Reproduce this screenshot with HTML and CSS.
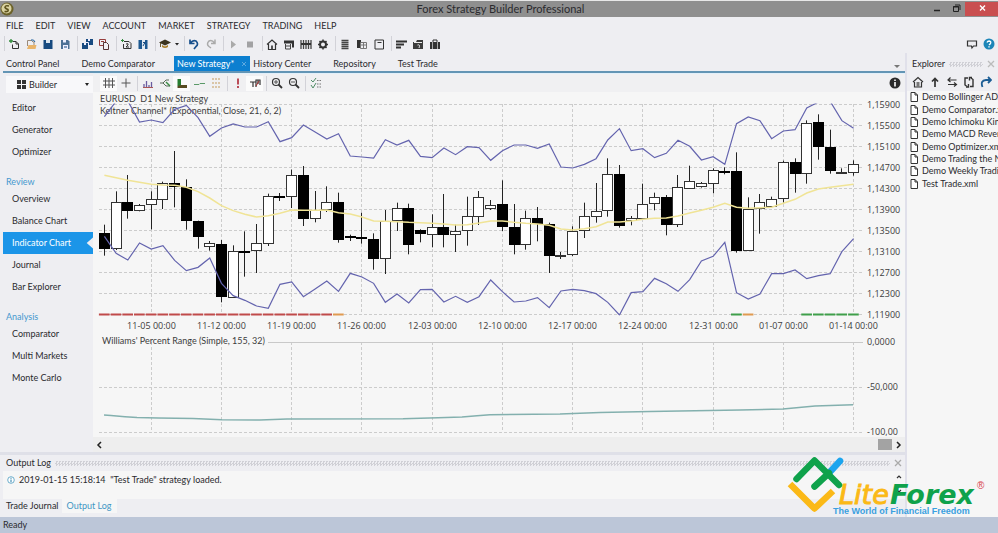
FILE: index.html
```html
<!DOCTYPE html>
<html lang="en">
<head>
<meta charset="utf-8">
<title>Forex Strategy Builder Professional</title>
<link rel="stylesheet" href="styles.css">
</head>
<body>
<div class="app">
  <header class="titlebar">
    <svg class="app-logo" viewBox="0 0 14 14"><circle cx="7" cy="7" r="6.5" fill="#6b6128"/><circle cx="6.500" cy="6.500" r="5" fill="#d9d2a0"/><path d="M9 4Q5 3 5 5.500Q6 7 8 7.500Q9 10 4.500 9.500" fill="none" stroke="#5c521c" stroke-width="1.600"/></svg>
    <h1 class="title">Forex Strategy Builder Professional</h1>
    <div class="window-buttons">
      <button class="win" aria-label="Minimize"><svg viewBox="0 0 12 12"><path d="M3 8.500h6" stroke="#222" stroke-width="1.500"/></svg></button>
      <button class="win" aria-label="Restore"><svg viewBox="0 0 12 12"><path d="M3.500 4.500h5v5h-5zM5 3h5v5" fill="none" stroke="#222"/><path d="M3 5h6" stroke="#222"/></svg></button>
      <button class="win win-close" aria-label="Close"><svg viewBox="0 0 12 12"><path d="M4 3.500l5 5M9 3.500l-5 5" stroke="#fff" stroke-width="1.400"/></svg></button>
    </div>
  </header>

  <nav class="menu">
    <button>FILE</button><button>EDIT</button><button>VIEW</button><button>ACCOUNT</button><button>MARKET</button><button>STRATEGY</button><button>TRADING</button><button>HELP</button>
  </nav>

  <div class="toolbar">
    <div class="group">
      <button aria-label="New"><svg viewBox="0 0 12 12"><path d="M5 3.500h3l2.500 2.500v4.500h-6v-4M8 3.500v2.500h2.500" fill="none" stroke="#333"/><path d="M3 1v4M1 3h4" stroke="#2f8a3a" stroke-width="1.300"/></svg></button>
      <button aria-label="Open"><svg viewBox="0 0 12 12"><path d="M2.500 8V2.500h4L8 4h1v3" fill="none" stroke="#9a8a7a"/><path d="M2 11l1.500-4H11.500l-1 4z" fill="#e9b46a"/><path d="M6 2q3-1 4 2" fill="none" stroke="#1c5f9c"/></svg></button>
      <button aria-label="Save"><svg viewBox="0 0 12 12"><path d="M1.500 2h9v9h-9z" fill="#174a80"/><path d="M4 2h4v3H4z" fill="#dce6f0"/></svg></button>
      <button aria-label="Save as"><svg viewBox="0 0 12 12"><path d="M2 2h7l1.500 1.500V11H2z" fill="#4d7096"/><path d="M4 2h3v2.500H4zM4 7h5v4H4z" fill="#eef"/><path d="M5 9h3" stroke="#174a80"/></svg></button>
    </div>
    <div class="group">
      <button aria-label="Save all"><svg viewBox="0 0 12 12"><path d="M5 1h7v6H5zM1 5h6v6H1z" fill="#174a80"/><path d="M7 1h2v2H7zM3 5h2v2H3z" fill="#eef"/><path d="M4.500 4.500h3v4" fill="none" stroke="#eef"/></svg></button>
      <button aria-label="Copy strategy"><svg viewBox="0 0 12 12"><path d="M1.500 1.500h6v6h-6z" fill="none" stroke="#963c3c"/><path d="M5.500 4.500h3l2 2v5h-5z" fill="#f2f0f4" stroke="#553333"/><path d="M3 3.500h3" stroke="#963c3c"/></svg></button>
    </div>
    <div class="group">
      <button aria-label="New chart"><svg viewBox="0 0 12 12"><path d="M4 3.500h5l2 2v5H3.500V6" fill="none" stroke="#333"/><path d="M2.500 1v3M1 2.500h3" stroke="#2f8a3a"/><path d="M6 6q3-1 2 1L6 9h3" fill="none" stroke="#333"/></svg></button>
      <button aria-label="Save chart"><svg viewBox="0 0 12 12"><path d="M1.500 2h9v9h-9z" fill="#1d5890"/><path d="M5 2h3v9H5z" fill="#e3eaf2"/><path d="M6 4.500h2L6 8" fill="none" stroke="#174a80"/></svg></button>
    </div>
    <div class="group">
      <button aria-label="Education"><svg viewBox="0 0 12 12"><path d="M0 4.500L6 1.500l6 3-6 3z" fill="#3c3520"/><path d="M3 7v2q3 2 6 0V7L6 8.500z" fill="#ad822c"/><path d="M1.500 5v4" stroke="#6b5a30"/></svg></button>
      <button class="caret" aria-label="More"><svg viewBox="0 0 6 12"><path d="M1 5h4L3 7.500z" fill="#222"/></svg></button>
    </div>
    <div class="group">
      <button aria-label="Undo"><svg viewBox="0 0 12 12"><path d="M2 1.500v4h4.500M2.500 5Q5 1.500 8 3q3 3 0 5.500L6 11" fill="none" stroke="#174f8c" stroke-width="1.700"/></svg></button>
      <button aria-label="Redo"><svg viewBox="0 0 12 12"><path d="M10 1.500v4H6M9.500 5Q7 1.500 4 3q-3 3 0 5.500L6 10" fill="none" stroke="#aaa" stroke-width="1.500"/></svg></button>
    </div>
    <div class="group">
      <button aria-label="Start"><svg viewBox="0 0 12 12"><path d="M4 2.500v8L9 6.500z" fill="#aaa"/></svg></button>
      <button aria-label="Stop"><svg viewBox="0 0 12 12"><path d="M3 3.500h6v6H3z" fill="#a2a2a4"/></svg></button>
    </div>
    <div class="group">
      <button aria-label="Home"><svg viewBox="0 0 12 12"><path d="M1 6.500L6 2l5 4.500M2.500 6v5.500h7V6" fill="none" stroke="#333" stroke-width="1.200"/><path d="M5 7.500h2v3.500H5z" fill="#555"/></svg></button>
      <button aria-label="Chart window"><svg viewBox="0 0 12 12"><path d="M1 2.500h10v7H9v-4H1z" fill="#333"/><path d="M2.500 6v5h5V6M3 8h4" fill="none" stroke="#444"/></svg></button>
      <button aria-label="Bars"><svg viewBox="0 0 12 12"><path d="M1 2v9M3.500 2v9M6 2v9M8.500 2v9M11 2v9" stroke="#444" stroke-width="1.300"/><path d="M1 6h10" stroke="#333" stroke-width="2"/></svg></button>
      <button aria-label="Settings"><svg viewBox="0 0 12 12"><circle cx="6" cy="6.500" r="3" fill="none" stroke="#333" stroke-width="2"/><path d="M6 1.500v2M6 9.500v2M1 6.500h2M9 6.500h2M2.500 3l1.300 1.300M8.200 8.700L9.500 10M2.500 10l1.300-1.300M8.200 4.300L9.500 3" stroke="#333" stroke-width="1.500"/></svg></button>
    </div>
    <div class="group">
      <button aria-label="List"><svg viewBox="0 0 12 12"><path d="M2.500 2.500h7M2.500 4.500h7M2.500 6.500h7M2.500 8.500h7M2.500 10.500h7" stroke="#444" stroke-width="1.400"/></svg></button>
      <button aria-label="Compare"><svg viewBox="0 0 12 12"><path d="M1 2h4v8H1z" fill="#333"/><path d="M4.500 4.500h6v6h-6zM7.500 4.500v6M4.500 7h6" fill="none" stroke="#777"/></svg></button>
      <button aria-label="Notes"><svg viewBox="0 0 12 12"><path d="M2 2h8.500v9H2z" fill="none" stroke="#333"/><path d="M4.500 4.500h4" stroke="#333"/></svg></button>
    </div>
    <div class="group">
      <button aria-label="Sort"><svg viewBox="0 0 12 12"><path d="M1 3.500h11M1 6.500h8M1 9.500h5" stroke="#333" stroke-width="1.800"/></svg></button>
      <button aria-label="Open folder"><svg viewBox="0 0 12 12"><path d="M1 4h3l1-2h6v9H1z" fill="#3c3c3c"/><path d="M2 4.500h8M5.500 7q3-1 1.500 3" fill="none" stroke="#eee"/></svg></button>
      <button aria-label="Portfolio"><svg viewBox="0 0 12 12"><path d="M1 4h10v7H1z" fill="#333"/><path d="M4 4V2h4v2" fill="none" stroke="#333"/><path d="M3.500 4v7M8.500 4v7" stroke="#aaa"/></svg></button>
    </div>
    <div class="group toolbar-end">
      <button aria-label="Feedback"><svg viewBox="0 0 12 12"><path d="M1.500 3h9v5H7.500L6 10 5.500 8h-4z" fill="none" stroke="#333" stroke-width="1.200"/></svg></button>
      <button aria-label="Help"><svg viewBox="0 0 12 12"><circle cx="6" cy="6" r="5.500" fill="#1d86b8"/><path d="M4 4.500Q4.500 3 6.200 3 8.500 3.500 7.500 5.500L6 7" fill="none" stroke="#fff" stroke-width="1.300"/><path d="M5.300 8.200h1.400v1.400H5.300z" fill="#fff"/></svg></button>
    </div>
  </div>

  <div class="body">
    <div class="left">
      <div class="tabs">
        <button class="tab">Control Panel</button>
        <button class="tab">Demo Comparator</button>
        <button class="tab tab-active">New Strategy*<svg viewBox="0 0 6 6"><path d="M1 1l4 4M5 1L1 5" stroke="#5ea9df"/></svg></button>
        <button class="tab">History Center</button>
        <button class="tab">Repository</button>
        <button class="tab">Test Trade</button>
        <svg class="tabs-more" viewBox="0 0 6 6"><path d="M0 2h6L3 5z" fill="#777"/></svg>
      </div>

      <div class="work">
        <aside class="sidebar">
          <label class="mode">
            <svg viewBox="0 0 9 9"><path d="M0 0h4v4H0zM5 0h4v4H5zM0 5h4v4H0zM5 5h4v4H5z" fill="#333"/></svg>
            <select aria-label="Mode"><option>Builder</option></select>
            <svg class="mode-caret" viewBox="0 0 4 3"><path d="M0 0h4L2 3z" fill="#222"/></svg>
          </label>
          <a href="#">Editor</a>
          <a href="#">Generator</a>
          <a href="#">Optimizer</a>
          <h2>Review</h2>
          <a href="#">Overview</a>
          <a href="#">Balance Chart</a>
          <a href="#" class="current">Indicator Chart</a>
          <a href="#">Journal</a>
          <a href="#">Bar Explorer</a>
          <h2>Analysis</h2>
          <a href="#">Comparator</a>
          <a href="#">Multi Markets</a>
          <a href="#">Monte Carlo</a>
        </aside>

        <main class="chart-pane">
          <div class="chart-tools">
            <div class="group">
              <button class="on" aria-label="Grid"><svg viewBox="0 0 12 12"><path d="M2.500 1v10M6 1v10M9.500 1v10M0 4h12M0 8h12" stroke="#555"/></svg></button>
              <button aria-label="Cross"><svg viewBox="0 0 12 12"><path d="M6 1.500v9M1.500 6h9" stroke="#555"/></svg></button>
            </div>
            <div class="group">
              <button aria-label="Volume"><svg viewBox="0 0 12 12"><path d="M2 7v4M4.500 4v7M7 8v3M9.500 5v6" stroke="#6a5ca0" stroke-width="1.300"/><path d="M1 10.500h10" stroke="#a55"/></svg></button>
              <button aria-label="Orders"><svg viewBox="0 0 12 12"><path d="M1 6h3l3-3h3M4 6l3 3h4" fill="none" stroke="#5a6b5a"/><path d="M7 5l4 4" stroke="#3a8c44" stroke-width="1.400"/></svg></button>
              <button class="on" aria-label="Position lots"><svg viewBox="0 0 12 12"><path d="M1.500 2H5v7H1.500z" fill="#277d32"/><path d="M5 8h6v3H1.500V9z" fill="#584b22"/></svg></button>
              <button aria-label="Price line"><svg viewBox="0 0 12 12"><path d="M1 7.500h5l1-1h5" fill="none" stroke="#5a9968"/></svg></button>
              <button aria-label="Equity"><svg viewBox="0 0 12 12"><path d="M2 2h9M2 6h9M2 10h9" stroke="#c49b5c" stroke-dasharray="2 1"/></svg></button>
            </div>
            <div class="group">
              <button aria-label="Warnings"><svg viewBox="0 0 12 12"><path d="M6 1.500v6M6 9v2" stroke="#b43b48" stroke-width="1.800"/></svg></button>
              <button class="on" aria-label="Indicators"><svg viewBox="0 0 12 12"><path d="M1 5h3v5M4 5h3v5M7 7V3h2v4M9 3h2v5" fill="none" stroke="#333" stroke-width="1.200"/><path d="M7 9l3-5" stroke="#a33"/></svg></button>
            </div>
            <div class="group">
              <button aria-label="Zoom in"><svg viewBox="0 0 12 12"><circle cx="5" cy="5" r="3.500" fill="none" stroke="#333" stroke-width="1.200"/><path d="M7.500 7.500L11 11" stroke="#333" stroke-width="1.800"/><path d="M3 5h4M5 3v4" stroke="#555"/></svg></button>
              <button aria-label="Zoom out"><svg viewBox="0 0 12 12"><circle cx="5" cy="5" r="3.500" fill="none" stroke="#333" stroke-width="1.200"/><path d="M7.500 7.500L11 11" stroke="#333" stroke-width="1.800"/><path d="M3 5h4" stroke="#555"/></svg></button>
            </div>
            <div class="group">
              <button aria-label="Options"><svg viewBox="0 0 12 12"><path d="M1 3l2 2 3-4M1 8l2 3 3-5" fill="none" stroke="#4f8c66"/><path d="M7 3.500h4M7 7h4M7 10h4" stroke="#777" stroke-dasharray="1.500 1"/></svg></button>
            </div>
            <button class="info" aria-label="Info"><svg viewBox="0 0 12 12"><circle cx="6" cy="6" r="5.500" fill="#2b2b2b"/><path d="M6 2.500v1.500M6 5v4.500" stroke="#fff" stroke-width="1.600"/></svg></button>
          </div>
          <svg class="chart" id="chart" viewBox="93 92 812 345" role="img" aria-label="EURUSD D1 price chart"></svg>
          <div class="scroller">
            <button aria-label="Scroll left"><svg viewBox="0 0 6 8"><path d="M5 1L2 4l3 3" fill="none" stroke="#222" stroke-width="1.500"/></svg></button>
            <span class="thumb"></span>
            <button aria-label="Scroll right"><svg viewBox="0 0 6 8"><path d="M1 1l3 3-3 3" fill="none" stroke="#222" stroke-width="1.500"/></svg></button>
          </div>
        </main>
      </div>

      <section class="log">
        <div class="panel-head"><h2>Output Log</h2><span class="grip"></span><button class="close" aria-label="Close log"><svg viewBox="0 0 8 8"><path d="M1 1l6 6M7 1L1 7" stroke="#aaa" stroke-width="1.300"/></svg></button></div>
        <div class="log-body">
          <svg viewBox="0 0 8 8"><circle cx="4" cy="4" r="3.300" fill="#fff" stroke="#4a9ac0" stroke-width=".8"/><path d="M4 1.800v1M4 3.500v2.700" stroke="#277ca8"/></svg>
          <p>2019-01-15 15:18:14 &nbsp;"Test Trade" strategy loaded.</p>
          <div class="log-scroll"><svg viewBox="0 0 6 4"><path d="M1 3l2-2 2 2" fill="none" stroke="#333" stroke-width="1.200"/></svg><svg viewBox="0 0 6 4"><path d="M1 1l2 2 2-2" fill="none" stroke="#333" stroke-width="1.200"/></svg></div>
        </div>
        <div class="log-tabs"><button>Trade Journal</button><button class="on">Output Log</button></div>
      </section>
    </div>

    <aside class="explorer">
      <div class="panel-head"><h2>Explorer</h2><span class="grip"></span><button class="close" aria-label="Close explorer"><svg viewBox="0 0 8 8"><path d="M1 1l6 6M7 1L1 7" stroke="#bbb" stroke-width="1.300"/></svg></button></div>
      <div class="explorer-tools">
        <button aria-label="Home"><svg viewBox="0 0 12 12"><path d="M1 6L6 1.500 11 6M2.500 6v5h7V6" fill="none" stroke="#333" stroke-width="1.200"/><path d="M4.500 6h3v5h-3z" fill="#777"/></svg></button>
        <button aria-label="Up"><svg viewBox="0 0 12 12"><path d="M6 11V3M3 5.500l3-3 3 3" fill="none" stroke="#333" stroke-width="1.700"/></svg></button>
        <button aria-label="Swap"><svg viewBox="0 0 12 12"><path d="M10.500 4H2.500M4.500 1.500L2 4l2.500 2M2 8.500h8M8 6.500l2.500 2-2.500 2" fill="none" stroke="#333" stroke-width="1.200"/></svg></button>
        <button aria-label="Refresh"><svg viewBox="0 0 12 12"><path d="M5 2H2v7l2 1.500M7 10.500h3v-7L8 2M5.500 8v3H3M6.500 4.500V1.500H9" fill="none" stroke="#333" stroke-width="1.400"/></svg></button>
        <button aria-label="Forward"><svg viewBox="0 0 12 12"><path d="M2.500 11Q0 4.500 6 4h4M8 1l3 3-3 3" fill="none" stroke="#1b5d95" stroke-width="1.800"/></svg></button>
      </div>
      <div class="file-pane">
        <ul class="files" id="files">
          <li>Demo Bollinger ADX.xml</li>
          <li>Demo Comparator.xml</li>
          <li>Demo Ichimoku Kinko.xml</li>
          <li>Demo MACD Reverse.xml</li>
          <li>Demo Optimizer.xml</li>
          <li>Demo Trading the News.xml</li>
          <li>Demo Weekly Trading.xml</li>
          <li>Test Trade.xml</li>
        </ul>
      </div>
    </aside>
  </div>

  <footer class="status">Ready</footer>

  <svg class="brand" viewBox="785 453 204 64" role="img" aria-label="LiteForex">
    <g fill="none" stroke-width="6.500" stroke-linejoin="round">
      <path d="M790 484l24.500 24.500L833 491" stroke="#fbb917"/>
      <path d="M829 473l11-12" stroke="#1ba4ee" stroke-linecap="round"/>
      <path d="M796.500 479l18-18.500L839 485M814.500 486.500L829 473" stroke="#0fa24b" stroke-linecap="round"/>
    </g>
    <text class="brand-lite" x="839" y="504">Lite</text>
    <text class="brand-forex" x="890" y="504">Forex</text>
    <text class="brand-line" x="833" y="514">The World of Financial Freedom</text>
    <text class="brand-r" x="977" y="489">®</text>
  </svg>
</div>
<script src="chart.js"></script>
</body>
</html>
```
FILE: styles.css
```css
* { box-sizing: border-box; }
body {
  margin: 0;
  font-family: Lato, "Open Sans", sans-serif;
  font-size: 9px;
  line-height: 12px;
  color: #2a2a2e;
  background: #eeeef2;
}
button, select {
  margin: 0;
  padding: 0;
  border: 0;
  background: none;
  font: inherit;
  color: inherit;
}
h1, h2, p, ul { margin: 0; padding: 0; font: inherit; }
a { color: inherit; text-decoration: none; }
svg { display: block; }

.app {
  position: relative;
  display: flex;
  flex-direction: column;
  min-height: 100vh;
}

.titlebar {
  display: flex;
  align-items: center;
  height: 17px;
  border-top: 1px solid #e8e8e8;
  background: #8f8f8f;
}
.app-logo { width: 14px; height: 14px; }
.title { flex: 1; padding-left: 60px; text-align: center; font-size: 11px; }
.window-buttons { display: flex; }
.win { display: flex; justify-content: center; width: 19px; height: 14px; }
.win svg { width: 12px; height: 12px; }
.win-close { width: 33px; background: #c94f50; }

.menu { display: flex; align-items: center; gap: 12px; height: 17px; padding-left: 6px; }

.toolbar { display: flex; align-items: center; height: 19px; padding-left: 4px; }
.group { display: flex; align-items: center; padding: 0 3px 0 1px; border-left: 1px solid #d2d2d8; }
.group button, .explorer-tools button, .info {
  display: flex;
  align-items: center;
  justify-content: center;
  width: 17px;
  height: 15px;
}
.toolbar .group button { justify-content: flex-start; padding-left: 2px; }
.group svg, .explorer-tools svg, .info svg { width: 12px; height: 12px; }
.toolbar .group .caret { width: 7px; padding: 0; }
.group .caret svg { width: 6px; }
.group button.on { background: #fbfbfb; }
.toolbar-end { margin-left: auto; padding: 0; border: 0; }

.body { display: flex; flex: 1; }
.left { display: flex; flex: 1; flex-direction: column; min-width: 0; }

.tabs {
  display: flex;
  align-items: flex-end;
  height: 20px;
  margin-left: 3px;
  border-bottom: 2px solid #6395b5;
}
.tab { height: 15px; padding: 0 19px 0 3px; text-align: left; white-space: nowrap; }
.tab-active { display: flex; align-items: center; gap: 7px; padding-right: 3px; background: #0c7fd0; color: #fff; }
.tab-active svg { width: 6px; height: 6px; }
.tabs-more { width: 6px; height: 6px; margin: 0 5px 2px auto; }

.work { display: flex; flex: 1; }
.sidebar { display: flex; flex-direction: column; width: 93px; padding: 3px 0 0 3px; }
.mode { display: flex; align-items: center; height: 17px; margin: 0 0 4px 3px; padding: 0 4px 0 11px; background: #f8f8fa; }
.mode svg { width: 9px; height: 9px; }
.mode select { flex: 1; padding-left: 3px; appearance: none; }
.mode .mode-caret { width: 4px; height: 3px; }
.sidebar a { height: 22px; padding-left: 9px; line-height: 22px; }
.sidebar h2 { height: 13px; margin-top: 12px; padding-left: 3px; line-height: 13px; color: #4598cf; }
.sidebar .current {
  background: #1b95e8;
  color: #fff;
  clip-path: polygon(0 0, 100% 0, 100% 25%, 93% 50%, 100% 75%, 100% 100%, 0 100%);
}

.chart-pane { display: flex; flex: 1; flex-direction: column; min-width: 0; background: #f6f6f6; }
.chart-tools { display: flex; align-items: center; height: 19px; padding-left: 5px; background: #f0f0f2; border-top: 1px solid #e2f0fa; }
.chart-tools .group:first-child { border-color: transparent; }
.info { margin: 0 2px 0 auto; }
.chart { flex: 1; width: 100%; min-height: 0; }
.chart .grid { stroke: #cccccc; stroke-dasharray: 3 2; fill: none; }
.chart .frame { stroke: #c9c9c9; }
.chart text { font-size: 9px; fill: #3c3c3c; }
.chart .axis { font-family: "Open Sans", sans-serif; }
.chart .mid { text-anchor: middle; }
.chart .band { fill: none; stroke: #6464ae; stroke-width: 1.2; }
.chart .average { fill: none; stroke: #f0e496; stroke-width: 1.5; }
.chart .percent { fill: none; stroke: #83b0ae; stroke-width: 1.5; }
.chart .wick { stroke: #222; }
.chart .up { fill: #fff; stroke: #333; }
.chart .down { fill: #000; stroke: #000; }
.chart .signal { stroke-width: 2; }
.chart .red { stroke: #c04a4a; }
.chart .orange { stroke: #e09a50; }
.chart .green { stroke: #3f9f4a; }

.scroller { display: flex; align-items: center; height: 15px; padding: 0 3px; background: #eee; }
.scroller svg { width: 6px; height: 8px; }
.scroller button { width: 6px; height: 8px; }
.thumb { width: 14px; height: 11px; margin: 0 4px 0 auto; background: #a3a3a3; }

.log { border-top: 3px solid #dfe0e8; }
.panel-head { display: flex; align-items: center; gap: 4px; height: 16px; padding-left: 6px; }
.grip { flex: 1; height: 5px; background: repeating-conic-gradient(#d0d0d6 0 25%, #eeeef2 0 50%) 0 0 / 3px 3px; }
.close { width: 8px; height: 8px; margin-right: 3px; }
.close svg { width: 8px; height: 8px; }
.log-body { display: flex; align-items: flex-start; height: 28px; margin-left: 3px; padding: 3px 3px 0 4px; background: #f6f6f6; }
.log-body > svg { width: 8px; height: 8px; margin: 2px 4px 0 0; }
.log-scroll { display: flex; flex-direction: column; gap: 10px; margin: 1px 0 0 auto; }
.log-scroll svg { width: 6px; height: 4px; }
.log-tabs { display: flex; height: 18px; padding: 0 0 4px 3px; }
.log-tabs button { padding: 0 3px; }
.log-tabs .on { padding: 0 5px; background: #f6f6f6; color: #3f97c4; }

.explorer { display: flex; flex-direction: column; width: 93px; padding-top: 3px; border-left: 2px solid #e0e0ea; overflow: hidden; }
.explorer .panel-head { flex: none; padding-left: 5px; }
.explorer-tools { display: flex; flex: none; height: 19px; align-items: center; padding-left: 2px; }
.file-pane { flex: 1; padding-left: 3px; background: #f6f6f6; }
.files {
  display: grid;
  grid-auto-rows: 1fr;
  height: 99px;
  list-style: none;
  white-space: nowrap;
}
.files li { display: flex; align-items: center; gap: 4px; }
.files svg { flex: none; width: 8px; height: 10px; }

.status { height: 16px; padding: 2px 3px; background: #bcc6d8; }

.brand { position: absolute; right: 9px; bottom: 16px; width: 204px; height: 64px; }
.brand-lite, .brand-forex { font: italic 27px "DejaVu Sans", sans-serif; }
.brand-lite { fill: #fbb917; stroke: #fbb917; }
.brand-forex { fill: #0fa24b; font-weight: bold; }
.brand-line { fill: #3aa0e0; font: bold 9px "Liberation Sans", sans-serif; }
.brand-r { fill: #d8404a; font: 10px "Liberation Sans", sans-serif; }
```
FILE: chart.js
```js
// Bars: high, body top, body bottom, low, direction (1 = up, 0 = down).
// Values are thirds of a chart unit, measured down from TOP.
const TOP = 90;
const bars = [
  [404,429,478,497,0],[304,338,478,480,1],[255,338,363,386,0],[342,346,364,364,1],[304,329,346,418,1],
  [275,279,329,357,1],[183,279,290,352,0],[268,291,394,419,0],[392,394,440,476,0],[453,461,471,482,1],
  [450,462,622,637,0],[466,485,623,623,1],[424,483,486,560,0],[402,461,484,549,1],[311,318,462,468,1],
  [309,320,323,333,0],[239,256,322,354,1],[228,256,386,408,0],[303,362,388,397,1],[289,338,361,366,1],
  [308,338,451,458,0],[434,438,442,453,0],[368,442,448,461,0],[430,449,507,539,0],[360,394,507,552,1],
  [338,355,394,423,1],[341,355,466,493,0],[418,421,433,457,0],[373,413,434,472,1],[312,413,434,472,0],
  [404,424,434,486,1],[320,380,424,467,1],[303,323,381,405,1],[330,345,357,360,1],[271,344,411,423,0],
  [342,412,466,493,0],[362,386,466,479,1],[351,386,401,454,0],[398,402,499,549,0],[486,495,499,507,1],
  [409,424,494,498,1],[338,380,424,444,1],[279,364,382,398,1],[205,252,364,380,1],[225,252,408,413,0],
  [378,386,394,406,1],[281,344,387,387,1],[308,322,343,361,1],[315,322,405,436,0],[255,293,405,411,1],
  [227,275,296,296,1],[276,281,290,293,1],[235,242,281,310,1],[232,245,248,253,0],[187,245,483,488,0],
  [322,358,482,482,1],[312,338,357,431,1],[320,328,351,353,1],[212,217,327,338,1],[205,217,252,308,0],
  [91,99,252,281,1],[73,98,171,209,0],[119,171,242,251,0],[235,247,250,250,1],[211,223,248,257,1]
];
const upper = [80,34,33,96,90,98,58,46,83,139,114,102,111,111,95,155,143,105,126,147,131,198,201,204,149,165,151,199,203,174,194,170,173,211,182,165,165,175,162,231,234,223,206,150,116,182,176,203,190,151,169,210,200,223,101,81,92,146,123,119,54,36,34,92,115];
const lower = [439,490,510,459,477,467,511,542,532,504,580,617,631,648,655,583,576,620,597,573,604,550,561,580,637,612,639,599,598,636,619,637,620,570,605,636,633,623,653,603,598,602,611,637,675,608,605,565,581,604,569,513,499,457,608,627,612,551,551,540,566,557,551,485,446];
const middle = [256,263,271,277,283,285,286,292,305,324,347,362,373,381,377,370,360,361,361,360,368,372,381,393,394,395,397,398,400,402,405,404,399,393,393,397,400,402,406,417,420,416,410,396,396,393,388,385,384,378,369,361,352,340,352,355,353,352,340,328,309,297,292,287,283];
const percent = "104,415 111,415.500 125,416.700 137,417.500 158,418 193,418.500 222,419.700 260,420 287,419 403,418.700 438,417.700 462,417 477,415.700 490,414.700 560,414 600,412.500 650,411.500 740,410 783,409 815,406 853,404.700";
const dates = ["11-05","11-12","11-19","11-26","12-03","12-10","12-17","12-24","12-31","01-07","01-14"];
const prices = ["1,15900","1,15500","1,15100","1,14700","1,14300","1,13900","1,13500","1,13100","1,12700","1,12300","1,11900"];

const xAt = i => 104.4 + i * 11.706;
const yAt = v => TOP + v / 3;
const line = (cls, x1, y1, x2, y2) => `<line class="${cls}" x1="${x1}" y1="${y1}" x2="${x2}" y2="${y2}"/>`;
const series = values => values.map((v, i) => `${xAt(i)},${yAt(v)}`).join(" ");

let out = '<defs><clipPath id="plot"><rect x="99" y="103.500" width="765" height="212"/></clipPath></defs>';

prices.forEach((p, i) => {
  const y = Math.floor(104 + i * 21.07) + 0.5;
  out += line("grid", 99, y, 863, y) + `<text class="axis" x="867" y="${y + 3}">${p}</text>`;
});
dates.forEach((d, i) => {
  const x = Math.floor(xAt(4 + i * 6)) + 0.5;
  out += line("grid", x, 104, x, 315) + line("grid", x, 342, x, 432);
  out += `<text class="axis mid" x="${x}" y="329">${d} 00:00</text>`;
});
out += line("frame", 268, 342.5, 863, 342.5) + line("grid", 99, 387.5, 863, 387.5) + line("grid", 99, 432.5, 863, 432.5);
out += '<text class="axis" x="867" y="345">0,0000</text><text class="axis" x="867" y="390">-50,000</text><text class="axis" x="867" y="435">-100,00</text>';
out += '<text x="100" y="102">EURUSD&#160; D1 New Strategy</text><text x="100" y="114">Keltner Channel* (Exponential, Close, 21, 6, 2)</text><text x="102" y="344">Williams\' Percent Range (Simple, 155, 32)</text>';

bars.forEach(([high, top, bottom, low, up], i) => {
  const x = Math.floor(xAt(i)) + 0.5;
  const y1 = Math.floor(yAt(top)) + 0.5;
  const y2 = Math.max(y1 + 1, Math.round(yAt(bottom)) - 0.5);
  out += line("wick", x, yAt(high), x, yAt(low));
  out += `<rect class="${up ? "up" : "down"}" x="${x - 5}" y="${y1}" width="10" height="${y2 - y1}"/>`;
});

out += `<g clip-path="url(#plot)"><polyline class="average" points="${series(middle)}"/>`;
out += `<polyline class="band" points="${series(upper)}"/><polyline class="band" points="${series(lower)}"/></g>`;
out += `<polyline class="percent" points="${percent}"/>`;

bars.forEach((b, i) => {
  const color = i < 20 ? "red" : i === 20 || i === 55 ? "orange" : i === 54 || i >= 60 ? "green" : "";
  if (color) out += line("signal " + color, xAt(i) - 5.5, 314.5, xAt(i) + 5.2, 314.5);
});
document.getElementById("chart").innerHTML = out;

document.querySelectorAll("#files li").forEach(li => {
  li.insertAdjacentHTML("afterbegin", '<svg viewBox="0 0 8 10"><path d="M1 .5h4L7.500 3v6.500H1zM5 .5V3h2.500" fill="#fff" stroke="#333"/></svg>');
});
```
